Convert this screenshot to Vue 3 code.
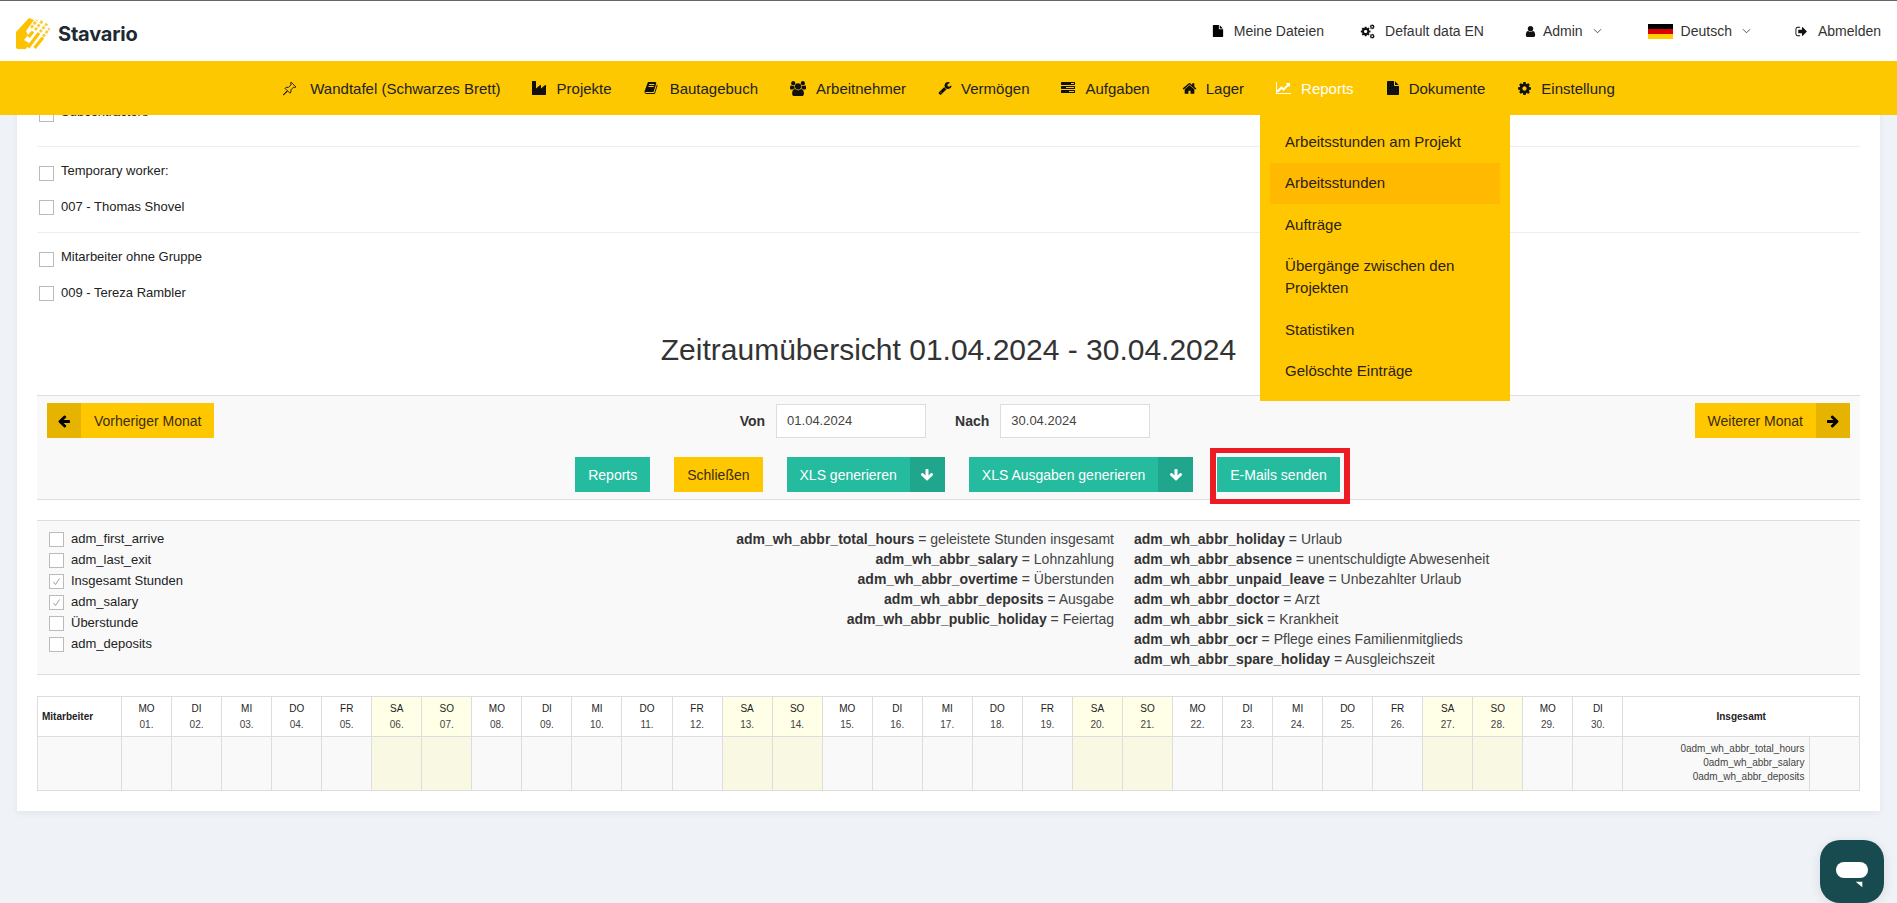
<script setup>
const P = {
  file: ['0 0 1792 1792', 'M1152 512v-472q22 14 36 28l408 408q14 14 28 36h-472zm-128 32q0 40 28 68t68 28h544v1056q0 40-28 68t-68 28h-1344q-40 0-68-28t-28-68v-1600q0-40 28-68t68-28h800v544z'],
  user: ['0 0 1792 1792', 'M1536 1399q0 109-62.5 187t-150.5 78h-854q-88 0-150.5-78t-62.5-187q0-85 8.5-160.5t31.5-152 58.5-131 94-89 134.5-34.5q131 128 313 128t313-128q76 0 134.5 34.5t94 89 58.5 131 31.5 152 8.5 160.5zm-256-887q0 159-112.5 271.5t-271.5 112.5-271.5-112.5-112.5-271.5 112.5-271.5 271.5-112.5 271.5 112.5 112.5 271.5z'],
  home: ['0 0 1792 1792', 'M1472 992v480q0 26-19 45t-45 19h-384v-384h-256v384h-384q-26 0-45-19t-19-45v-480q0-1 .5-3t.5-3l575-474 575 474q1 2 1 6zm223-69l-62 74q-8 9-21 11h-3q-13 0-21-7l-692-577-692 577q-12 8-24 7-13-2-21-11l-62-74q-8-10-7-23.5t11-21.5l719-599q32-26 76-26t76 26l244 204v-195q0-14 9-23t23-9h192q14 0 23 9t9 23v408l219 182q10 8 11 21.5t-7 23.5z'],
  chart: ['0 0 2048 1792', 'M1920 1536v128h-1920v-1536h128v1408h1792zm-128-1248v435q0 21-19.5 29.5t-35.5-7.5l-121-121-633 633q-10 10-23 10t-23-10l-233-233-416 416-192-192 585-585q10-10 23-10t23 10l233 233 464-464-121-121q-16-16-7.5-35.5t29.5-19.5h435q14 0 23 9t9 23z'],
  wrench: ['0 0 1792 1792', 'M448 1472q0-26-19-45t-45-19-45 19-19 45 19 45 45 19 45-19 19-45zm644-420l-682 682q-37 37-90 37-52 0-91-37l-106-108q-38-36-38-90 0-53 38-91l681-681q39 98 114.5 173.5t173.5 114.5zm634-435q0 39-23 106-47 134-164.5 217.5t-258.5 83.5q-185 0-316.5-131.5t-131.5-316.5 131.5-316.5 316.5-131.5q58 0 121.5 16.5t107.5 46.5q16 11 16 28t-16 28l-293 169v224l193 107q5-3 79-48.5t135.5-81 70.5-35.5q15 0 23.5 10t8.5 25z'],
  cog: ['0 0 1792 1792', 'M1152 896q0-106-75-181t-181-75-181 75-75 181 75 181 181 75 181-75 75-181zm512-109v222q0 12-8 23t-20 13l-185 28q-19 54-39 91 35 50 107 138 10 12 10 25t-9 23q-27 37-99 108t-94 71q-12 0-26-9l-138-108q-44 23-91 38-16 136-29 186-7 28-36 28h-222q-14 0-24.5-8.5t-11.5-21.5l-28-184q-49-16-90-37l-141 107q-10 9-25 9-14 0-25-11-126-114-165-168-7-10-7-23 0-12 8-23 15-21 51-66.5t54-70.5q-27-50-41-99l-183-27q-13-2-21-12.5t-8-23.5v-222q0-12 8-23t19-13l186-28q14-46 39-92-40-57-107-138-10-12-10-24 0-10 9-23 26-36 98.5-107.5t94.5-71.5q13 0 26 10l138 107q44-23 91-38 16-136 29-186 7-28 36-28h222q14 0 24.5 8.5t11.5 21.5l28 184q49 16 90 37l142-107q9-9 24-9 13 0 25 10 129 119 165 170 7 8 7 22 0 12-8 23-15 21-51 66.5t-54 70.5q26 50 41 98l183 28q13 2 21 12.5t8 23.5z'],
  users: ['0 0 1920 1792', 'M593 896q-162 5-265 128h-134q-82 0-138-40.5t-56-118.5q0-353 124-353 6 0 43.5 21t97.5 42.5 119 21.5q67 0 133-23-5 37-5 66 0 139 81 256zm1071 637q0 120-73 189.5t-194 69.5h-874q-121 0-194-69.5t-73-189.5q0-53 3.5-103.5t14-109 26.5-108.5 43-97.5 62-81 85.5-53.5 111.5-20q10 0 43 21.5t73 48 107 48 135 21.5 135-21.5 107-48 73-48 43-21.5q61 0 111.5 20t85.5 53.5 62 81 43 97.5 26.5 108.5 14 109 3.5 103.5zm-1024-1277q0 106-75 181t-181 75-181-75-75-181 75-181 181-75 181 75 75 181zm704 384q0 159-112.5 271.5t-271.5 112.5-271.5-112.5-112.5-271.5 112.5-271.5 271.5-112.5 271.5 112.5 112.5 271.5zm576 225q0 78-56 118.5t-138 40.5h-134q-103-123-265-128 81-117 81-256 0-29-5-66 66 23 133 23 59 0 119-21.5t97.5-42.5 43.5-21q124 0 124 353zm-128-609q0 106-75 181t-181 75-181-75-75-181 75-181 181-75 181 75 75 181z'],
  industry: ['0 0 1792 1792', 'M448 0q26 0 45 19t19 45v891l536-429q17-14 40-14 26 0 45 19t19 45v379l536-429q17-14 40-14 26 0 45 19t19 45v1152q0 26-19 45t-45 19h-1664q-26 0-45-19t-19-45v-1664q0-26 19-45t45-19h384z'],
  book: ['0 0 1792 1792', 'M1703 478q40 57 18 129l-275 906q-19 64-76.5 107.5t-122.5 43.5h-923q-77 0-148.5-53.5t-99.5-131.5q-24-67-2-127 0-4 3-27t4-37q1-8-3-21.5t-3-19.5q2-11 8-21t16.5-23.5 16.5-23.5q23-38 45-91.5t30-91.5q3-10 .5-30t-.5-28q3-11 17-28t17-23q21-36 42-92t25-90q1-9-2.5-32t.5-28q4-13 22-30.5t22-22.5q19-26 42.5-84.5t27.5-96.5q1-8-3-25.5t-2-26.5q2-8 9-18t18-23 17-21q8-12 16.5-30.5t15-35 16-36 19.5-32 26.5-23.5 36-11.5 47.5 5.5l-1 3q38-9 51-9h761q74 0 114 56t18 130l-274 906q-36 119-71.5 153.5t-128.5 34.5h-869q-27 0-38 15-11 16-1 43 24 70 144 70h923q29 0 56-15.5t35-41.5l300-987q7-22 5-57 38 15 59 43zm-1064 2q-4 13 2 22.5t20 9.5h608q13 0 25.5-9.5t16.5-22.5l21-64q4-13-2-22.5t-20-9.5h-608q-13 0-25.5 9.5t-16.5 22.5zm-83 256q-4 13 2 22.5t20 9.5h608q13 0 25.5-9.5t16.5-22.5l21-64q4-13-2-22.5t-20-9.5h-608q-13 0-25.5 9.5t-16.5 22.5z'],
  tasks: ['0 0 1792 1792', 'M1024 1408h640v-128h-640v128zm-384-512h1024v-128h-1024v128zm640-512h384v-128h-384v128zm512 832v256q0 26-19 45t-45 19h-1664q-26 0-45-19t-19-45v-256q0-26 19-45t45-19h1664q26 0 45 19t19 45zm0-512v256q0 26-19 45t-45 19h-1664q-26 0-45-19t-19-45v-256q0-26 19-45t45-19h1664q26 0 45 19t19 45zm0-512v256q0 26-19 45t-45 19h-1664q-26 0-45-19t-19-45v-256q0-26 19-45t45-19h1664q26 0 45 19t19 45z'],
  signout: ['0 0 1792 1792', 'M704 1440q0 4 1 20t.5 26.5-3 23.5-10 19.5-20.5 6.5h-320q-119 0-203.5-84.5t-84.5-203.5v-704q0-119 84.5-203.5t203.5-84.5h320q13 0 22.5 9.5t9.5 22.5q0 4 1 20t.5 26.5-3 23.5-10 19.5-20.5 6.5h-320q-66 0-113 47t-47 113v704q0 66 47 113t113 47h312l11.5 1 11.5 3 8 5.5 7 9 2 13.5zm928-544q0 26-19 45l-544 544q-19 19-45 19t-45-19-19-45v-288h-448q-26 0-45-19t-19-45v-384q0-26 19-45t45-19h448v-288q0-26 19-45t45-19 45 19l544 544q19 19 19 45z'],
  right: ['0 0 1792 1792', 'M1600 960q0 54-37 91l-651 651q-39 37-91 37-51 0-90-37l-75-75q-38-38-38-91t38-91l293-293h-704q-52 0-84.5-37.5t-32.5-90.5v-128q0-53 32.5-90.5t84.5-37.5h704l-293-294q-38-36-38-90t38-90l75-75q38-38 90-38 53 0 91 38l651 651q37 35 37 90z'],
  left: ['0 0 1792 1792', 'M1664 896v128q0 53-32.5 90.5t-84.5 37.5h-704l293 294q38 36 38 90t-38 90l-75 76q-37 37-90 37-52 0-91-37l-651-652q-37-37-37-90 0-52 37-91l651-650q38-38 91-38 52 0 90 38l75 74q38 38 38 91t-38 91l-293 293h704q52 0 84.5 37.5t32.5 90.5z'],
  down: ['0 0 1792 1792', 'M1675 832q0 53-37 90l-651 652q-39 37-91 37-53 0-90-37l-651-652q-38-36-38-90 0-53 38-91l74-75q39-37 91-37 53 0 90 37l294 294v-704q0-52 38-90t90-38h128q52 0 90 38t38 90v704l294-294q37-37 90-37 52 0 91 37l75 75q37 39 37 91z']
}
const nav = [
  { t: 'Wandtafel (Schwarzes Brett)', i: null, w: 28 },
  { t: 'Projekte', i: 'industry', w: 25, h: 14 },
  { t: 'Bautagebuch', i: 'book', w: 26, h: 14 },
  { t: 'Arbeitnehmer', i: 'users', w: 26, h: 15 },
  { t: 'Vermögen', i: 'wrench', w: 23, h: 14 },
  { t: 'Aufgaben', i: 'tasks', w: 24, h: 14 },
  { t: 'Lager', i: 'home', w: 24, h: 15 },
  { t: 'Reports', i: 'chart', w: 25, h: 14, active: true },
  { t: 'Dokumente', i: 'file', w: 23, h: 14 },
  { t: 'Einstellung', i: 'cog', w: 24, h: 15 }
]
const menu = [
  { t: 'Arbeitsstunden am Projekt' },
  { t: 'Arbeitsstunden', active: true },
  { t: 'Aufträge' },
  { t: 'Übergänge zwischen den Projekten' },
  { t: 'Statistiken' },
  { t: 'Gelöschte Einträge' }
]
const checks = [
  { t: 'adm_first_arrive' },
  { t: 'adm_last_exit' },
  { t: 'Insgesamt Stunden', on: true },
  { t: 'adm_salary', on: true },
  { t: 'Überstunde' },
  { t: 'adm_deposits' }
]
const legendA = [
  ['adm_wh_abbr_total_hours', 'geleistete Stunden insgesamt'],
  ['adm_wh_abbr_salary', 'Lohnzahlung'],
  ['adm_wh_abbr_overtime', 'Überstunden'],
  ['adm_wh_abbr_deposits', 'Ausgabe'],
  ['adm_wh_abbr_public_holiday', 'Feiertag']
]
const legendB = [
  ['adm_wh_abbr_holiday', 'Urlaub'],
  ['adm_wh_abbr_absence', 'unentschuldigte Abwesenheit'],
  ['adm_wh_abbr_unpaid_leave', 'Unbezahlter Urlaub'],
  ['adm_wh_abbr_doctor', 'Arzt'],
  ['adm_wh_abbr_sick', 'Krankheit'],
  ['adm_wh_abbr_ocr', 'Pflege eines Familienmitglieds'],
  ['adm_wh_abbr_spare_holiday', 'Ausgleichszeit']
]
const names = ['MO', 'DI', 'MI', 'DO', 'FR', 'SA', 'SO']
const days = Array.from({ length: 30 }, (_, i) => ({
  n: names[i % 7],
  d: String(i + 1).padStart(2, '0') + '.',
  we: i % 7 >= 5
}))
</script>

<template>
  <div class="page">
    <header class="top">
      <div class="brand">
        <svg class="logo" viewBox="0 0 34 31">
          <path d="M0 14 L13 0 L18 2 L10 13 L12 17 L8 22 L13 25 L10 31 L2 31 Q0 31 0 29 Z" fill="#fcc200" />
          <g fill="none" stroke="#fcc200" stroke-width="3.2">
            <path d="M12 29.5 L23 15" />
            <path d="M18.5 30 L27 19.5" />
            <path d="M12.5 19 L17 13.5" />
          </g>
          <g fill="none" stroke="#fbcb3a" stroke-width="2.8">
            <path d="M15 10 L21 2" stroke-dasharray="3.4 1.2" />
            <path d="M19 12 L27 2" stroke-dasharray="3 1.3" />
            <path d="M24 14 L31.5 5" stroke-dasharray="2.8 1.3" />
            <path d="M27 18.5 L33.5 10.5" stroke-dasharray="3 1.3" />
          </g>
        </svg>
        <span class="brand-name">Stavario</span>
      </div>
      <div class="top-right">
        <a class="tl tl-files"><svg class="ic14" :viewBox="P.file[0]"><path :d="P.file[1]" /></svg>Meine Dateien</a>
        <a class="tl tl-data">
          <svg class="ic-cogs" viewBox="0 0 16 16">
            <svg x="0" y="2" width="12" height="12" :viewBox="P.cog[0]"><path :d="P.cog[1]" /></svg>
            <svg x="10" y="0" width="6" height="6" :viewBox="P.cog[0]"><path :d="P.cog[1]" /></svg>
            <svg x="10" y="10" width="6" height="6" :viewBox="P.cog[0]"><path :d="P.cog[1]" /></svg>
          </svg>Default data EN
        </a>
        <a class="tl tl-admin"><svg class="ic-user" :viewBox="P.user[0]"><path :d="P.user[1]" /></svg>Admin<svg class="chev" viewBox="0 0 10 6"><path d="M1 1l4 4 4-4" /></svg></a>
        <a class="tl tl-lang">
          <span class="flag"><i class="f1"></i><i class="f2"></i><i class="f3"></i></span>Deutsch<svg class="chev" viewBox="0 0 10 6"><path d="M1 1l4 4 4-4" /></svg>
        </a>
        <a class="tl tl-out"><svg class="ic-out" :viewBox="P.signout[0]"><path :d="P.signout[1]" /></svg>Abmelden</a>
      </div>
    </header>

    <nav class="nav">
      <a v-for="n in nav" :key="n.t" class="nav-item" :class="{ active: n.active }">
        <span class="nav-slot" :style="{ width: n.w + 'px' }">
          <svg v-if="n.i" class="nav-ic" :viewBox="P[n.i][0]" :style="{ height: n.h + 'px' }"><path :d="P[n.i][1]" /></svg>
          <svg v-else class="pin" viewBox="0 0 16 16"><path d="M9.6 1.2l5.2 5.2-1.4.6-1.2-.3-2.7 2.7.1 2.4-1.2 1.2-2.3-2.3-4.7 4.2 4.2-4.7-2.3-2.3 1.2-1.2 2.4.1 2.7-2.7-.3-1.2z" /></svg>
        </span>
        <span>{{ n.t }}</span>
        <div v-if="n.active" class="drop">
          <div v-for="m in menu" :key="m.t" class="drop-item" :class="{ on: m.active }">{{ m.t }}</div>
        </div>
      </a>
    </nav>

    <main class="main">
      <section class="card">
        <div class="group first">
          <label class="row"><span class="box"></span><span>Subcontractors</span></label>
        </div>
        <div class="group">
          <label class="row"><span class="box"></span><span>Temporary worker:</span></label>
          <label class="row"><span class="box"></span><span>007 - Thomas Shovel</span></label>
        </div>
        <div class="group last">
          <label class="row"><span class="box"></span><span>Mitarbeiter ohne Gruppe</span></label>
          <label class="row"><span class="box"></span><span>009 - Tereza Rambler</span></label>
        </div>

        <h1 class="title">Zeitraumübersicht 01.04.2024 - 30.04.2024</h1>

        <div class="panel">
          <div class="period">
            <a class="ybtn prev"><span class="seg"><svg class="arr" :viewBox="P.left[0]"><path :d="P.left[1]" /></svg></span><span class="lbl">Vorheriger Monat</span></a>
            <div class="dates">
              <b>Von</b><span class="inp">01.04.2024</span>
              <b class="b2">Nach</b><span class="inp">30.04.2024</span>
            </div>
            <a class="ybtn next"><span class="lbl">Weiterer Monat</span><span class="seg"><svg class="arr" :viewBox="P.right[0]"><path :d="P.right[1]" /></svg></span></a>
          </div>
          <div class="actions">
            <a class="btn">Reports</a>
            <a class="btn yellow">Schließen</a>
            <a class="btn split"><span class="lbl">XLS generieren</span><span class="seg"><svg class="arr" :viewBox="P.down[0]"><path :d="P.down[1]" /></svg></span></a>
            <a class="btn split"><span class="lbl">XLS Ausgaben generieren</span><span class="seg"><svg class="arr" :viewBox="P.down[0]"><path :d="P.down[1]" /></svg></span></a>
            <a class="btn mail">E-Mails senden<span class="redbox"></span></a>
          </div>
        </div>

        <div class="panel opts">
          <div class="opt-list">
            <label v-for="c in checks" :key="c.t" class="opt">
              <span class="box"><svg v-if="c.on" viewBox="0 0 15 15"><path d="M4 8l2.4 3L11 4" /></svg></span>
              <span>{{ c.t }}</span>
            </label>
          </div>
          <div class="leg leg-a">
            <div v-for="l in legendA" :key="l[0]"><b>{{ l[0] }}</b> = {{ l[1] }}</div>
          </div>
          <div class="leg leg-b">
            <div v-for="l in legendB" :key="l[0]"><b>{{ l[0] }}</b> = {{ l[1] }}</div>
          </div>
        </div>

        <table class="tbl">
          <colgroup>
            <col class="c-name" />
            <col v-for="d in days" :key="d.d" class="c-day" />
            <col class="c-sum" />
            <col />
          </colgroup>
          <thead>
            <tr>
              <th class="th-name">Mitarbeiter</th>
              <th v-for="d in days" :key="d.d" :class="{ we: d.we }">{{ d.n }}<br /><span class="dn">{{ d.d }}</span></th>
              <th colspan="2" class="th-sum">Insgesamt</th>
            </tr>
          </thead>
          <tbody>
            <tr>
              <td></td>
              <td v-for="d in days" :key="d.d" :class="{ we: d.we }"></td>
              <td class="sum">0adm_wh_abbr_total_hours<br />0adm_wh_abbr_salary<br />0adm_wh_abbr_deposits</td>
              <td></td>
            </tr>
          </tbody>
        </table>
      </section>
    </main>

    <button class="chat" aria-label="Chat">
      <svg viewBox="0 0 32 26" width="32" height="26"><rect x="0" y="0" width="32" height="16" rx="8" fill="#fff" /><path d="M19.7 19.7h6.6v5.6z" fill="#fff" /></svg>
    </button>
  </div>
</template>

<style>
html, body { margin: 0; background: #eff3f8; overflow: hidden; }
</style>

<style scoped>
.page { position: relative; height: 903px; overflow: hidden; background: #eff3f8; font-family: "Liberation Sans", Arial, sans-serif; color: #222; }
svg { display: block; fill: currentColor; }

.top { height: 60px; border-top: 1px solid #666; background: #fff; display: flex; align-items: center; justify-content: space-between; padding: 0 16px; }
.brand { display: flex; align-items: center; gap: 8px; margin-top: 5px; }
.logo { width: 34px; height: 31px; }
.brand-name { font-family: Inter, "Liberation Sans", sans-serif; font-weight: 700; font-size: 20px; color: #1d2933; letter-spacing: -0.2px; }
.top-right { display: flex; align-items: center; font-size: 14px; color: #333; }
.tl { display: flex; align-items: center; white-space: nowrap; }
.tl-files { margin-right: 36px; }
.tl-data { margin-right: 40px; }
.tl-admin { margin-right: 46px; }
.tl-lang { margin-right: 44px; }
.ic14 { width: 12px; height: 14px; margin-right: 10px; color: #000; }
.ic-cogs { width: 15px; height: 15px; margin-right: 10px; color: #111; }
.ic-user { width: 13px; height: 13px; margin-right: 6px; color: #111; }
.ic-out { width: 13px; height: 13px; margin-right: 10px; color: #111; }
.chev { width: 9px; height: 6px; margin-left: 10px; fill: none; stroke: #444; stroke-width: 1; }
.flag { display: flex; flex-direction: column; width: 25px; height: 15px; margin-right: 8px; }
.flag i { flex: 1; }
.f1 { background: #000; }
.f2 { background: #d00; }
.f3 { background: #ffce00; }

.nav { position: relative; z-index: 5; height: 54px; background: #fdc800; display: flex; align-items: center; justify-content: center; gap: 32px; font-size: 15px; color: #222; }
.nav-item { position: relative; display: flex; align-items: center; white-space: nowrap; height: 54px; }
.nav-item:first-child { margin-right: -1px; }
.nav-slot { display: block; flex: none; }
.nav-ic { width: auto; max-width: 17px; color: #111; }
.pin { width: 15px; height: 15px; fill: none; stroke: #111; stroke-width: 1; }
.nav-item.active { color: #fff; }
.nav-item.active .nav-ic { color: #fff; }
.drop { position: absolute; top: 54px; left: -16px; width: 250px; box-sizing: border-box; padding: 6px 10px 9px; background: #ffc700; color: #2a2115; font-size: 15px; white-space: normal; }
.drop-item { padding: 9.75px 15px; line-height: 22px; }
.drop-item.on { background: #ffb900; }

.main { height: 788px; overflow: hidden; }
.card { margin: 0 17px; height: 704px; box-sizing: border-box; padding: 0 20px; background: #fff; box-shadow: 0 2px 6px rgba(60, 80, 110, .08); }
.group { padding: 19px 0 17px; border-bottom: 1px solid #eee; display: flex; flex-direction: column; gap: 19px; }
.group.first { padding: 0 0 24px; margin-top: -8px; }
.group.last { border-bottom: 0; padding-bottom: 0; }
.row, .opt { display: flex; align-items: flex-start; font-size: 13px; line-height: 15px; color: #222; }
.box { flex: none; box-sizing: border-box; width: 15px; height: 15px; border: 1px solid #bbb; background: #fff; margin-right: 7px; }
.row > span:last-child { margin-top: -3px; }
.row + .row > span:last-child { margin-top: -1px; }
.row .box { margin-left: 2px; }
.box svg { width: 13px; height: 13px; fill: none; stroke: #999; stroke-width: 1.1; }

.title { margin: 11px 0 0; height: 83px; font-weight: 400; font-size: 30px; line-height: 76px; text-align: center; color: #333; }

.panel { background: #f9f9f9; border-top: 1px solid #ddd; border-bottom: 1px solid #ddd; }
.period { display: grid; grid-template-columns: 1fr auto 1fr; align-items: center; padding: 7px 10px 0; height: 35px; }
.next { justify-self: end; }
.prev { justify-self: start; }
.ybtn { display: flex; align-items: stretch; height: 35px; background: #ffc700; color: #3a2c10; font-size: 14px; }
.ybtn .seg { width: 34px; background: #e5b300; display: flex; align-items: center; justify-content: center; color: #000; }
.ybtn .lbl { display: flex; align-items: center; padding: 0 13px 0 13px; }
.arr { width: 14px; height: 14px; }
.dates { display: flex; align-items: center; font-size: 14px; color: #333; padding-right: 7px; }
.dates b { margin-right: 11px; }
.dates .b2 { margin-left: 29px; }
.inp { box-sizing: border-box; width: 150px; height: 34px; background: #fff; border: 1px solid #ddd; padding-left: 10px; line-height: 32px; font-size: 13px; color: #444; }
.actions { display: flex; justify-content: center; gap: 24px; padding: 19px 0 7px 18px; }
.btn { position: relative; display: flex; align-items: center; height: 35px; padding: 0 13px; background: #25bb9f; color: #fff; font-size: 14px; white-space: nowrap; }
.btn.yellow { background: #ffc700; color: #3a2c10; }
.btn.split { padding: 0; align-items: stretch; }
.btn.split .lbl { display: flex; align-items: center; padding: 0 13px; }
.btn.split .seg { width: 35px; background: #20a68c; display: flex; align-items: center; justify-content: center; }
.redbox { position: absolute; inset: -9px -10px -12px -7px; border: 5px solid #ed1c24; border-width: 5px 6px; pointer-events: none; }

.opts { margin-top: 20px; height: 155px; box-sizing: border-box; display: flex; font-size: 14px; line-height: 20px; }
.opt-list { width: 200px; box-sizing: border-box; padding: 11px 0 0 12px; display: flex; flex-direction: column; gap: 6px; }
.opt { font-size: 13px; }
.opt > span:last-child { margin-top: -1px; }
.leg { padding-top: 8px; color: #444; }
.leg b { color: #333; }
.leg-a { flex: 1; text-align: right; }
.leg-b { width: 726px; margin-left: 20px; box-sizing: border-box; }

.tbl { margin-top: 21px; width: 1823px; table-layout: fixed; border-collapse: collapse; font-size: 10px; color: #333; }
.c-name { width: 84px; }
.c-day { width: 50.05px; }
.c-sum { width: 187px; }
.tbl th, .tbl td { border: 1px solid #ddd; padding: 0; text-align: center; }
.tbl th { height: 39px; font-weight: 400; line-height: 15.5px; background: #fff; color: #222; }
.tbl th.we { background: #ffffe8; }
.dn { color: #444; }
.th-name, .th-sum { font-weight: 700 !important; }
.tbl .th-name { text-align: left; padding-left: 4px; }
.tbl td { height: 51px; background: #f9f9f9; }
.tbl td.we { background: #f9f9e3; }
.tbl td.sum { text-align: right; padding: 0 5px 2px 0; line-height: 14px; color: #444; }

.chat { position: absolute; left: 1820px; top: 840px; width: 64px; height: 63px; padding: 22px 0 0; box-sizing: border-box; border: 0; border-radius: 20px; background: #174b50; display: flex; align-items: flex-start; justify-content: center; box-shadow: 0 2px 12px rgba(0, 0, 0, .1); }
</style>
